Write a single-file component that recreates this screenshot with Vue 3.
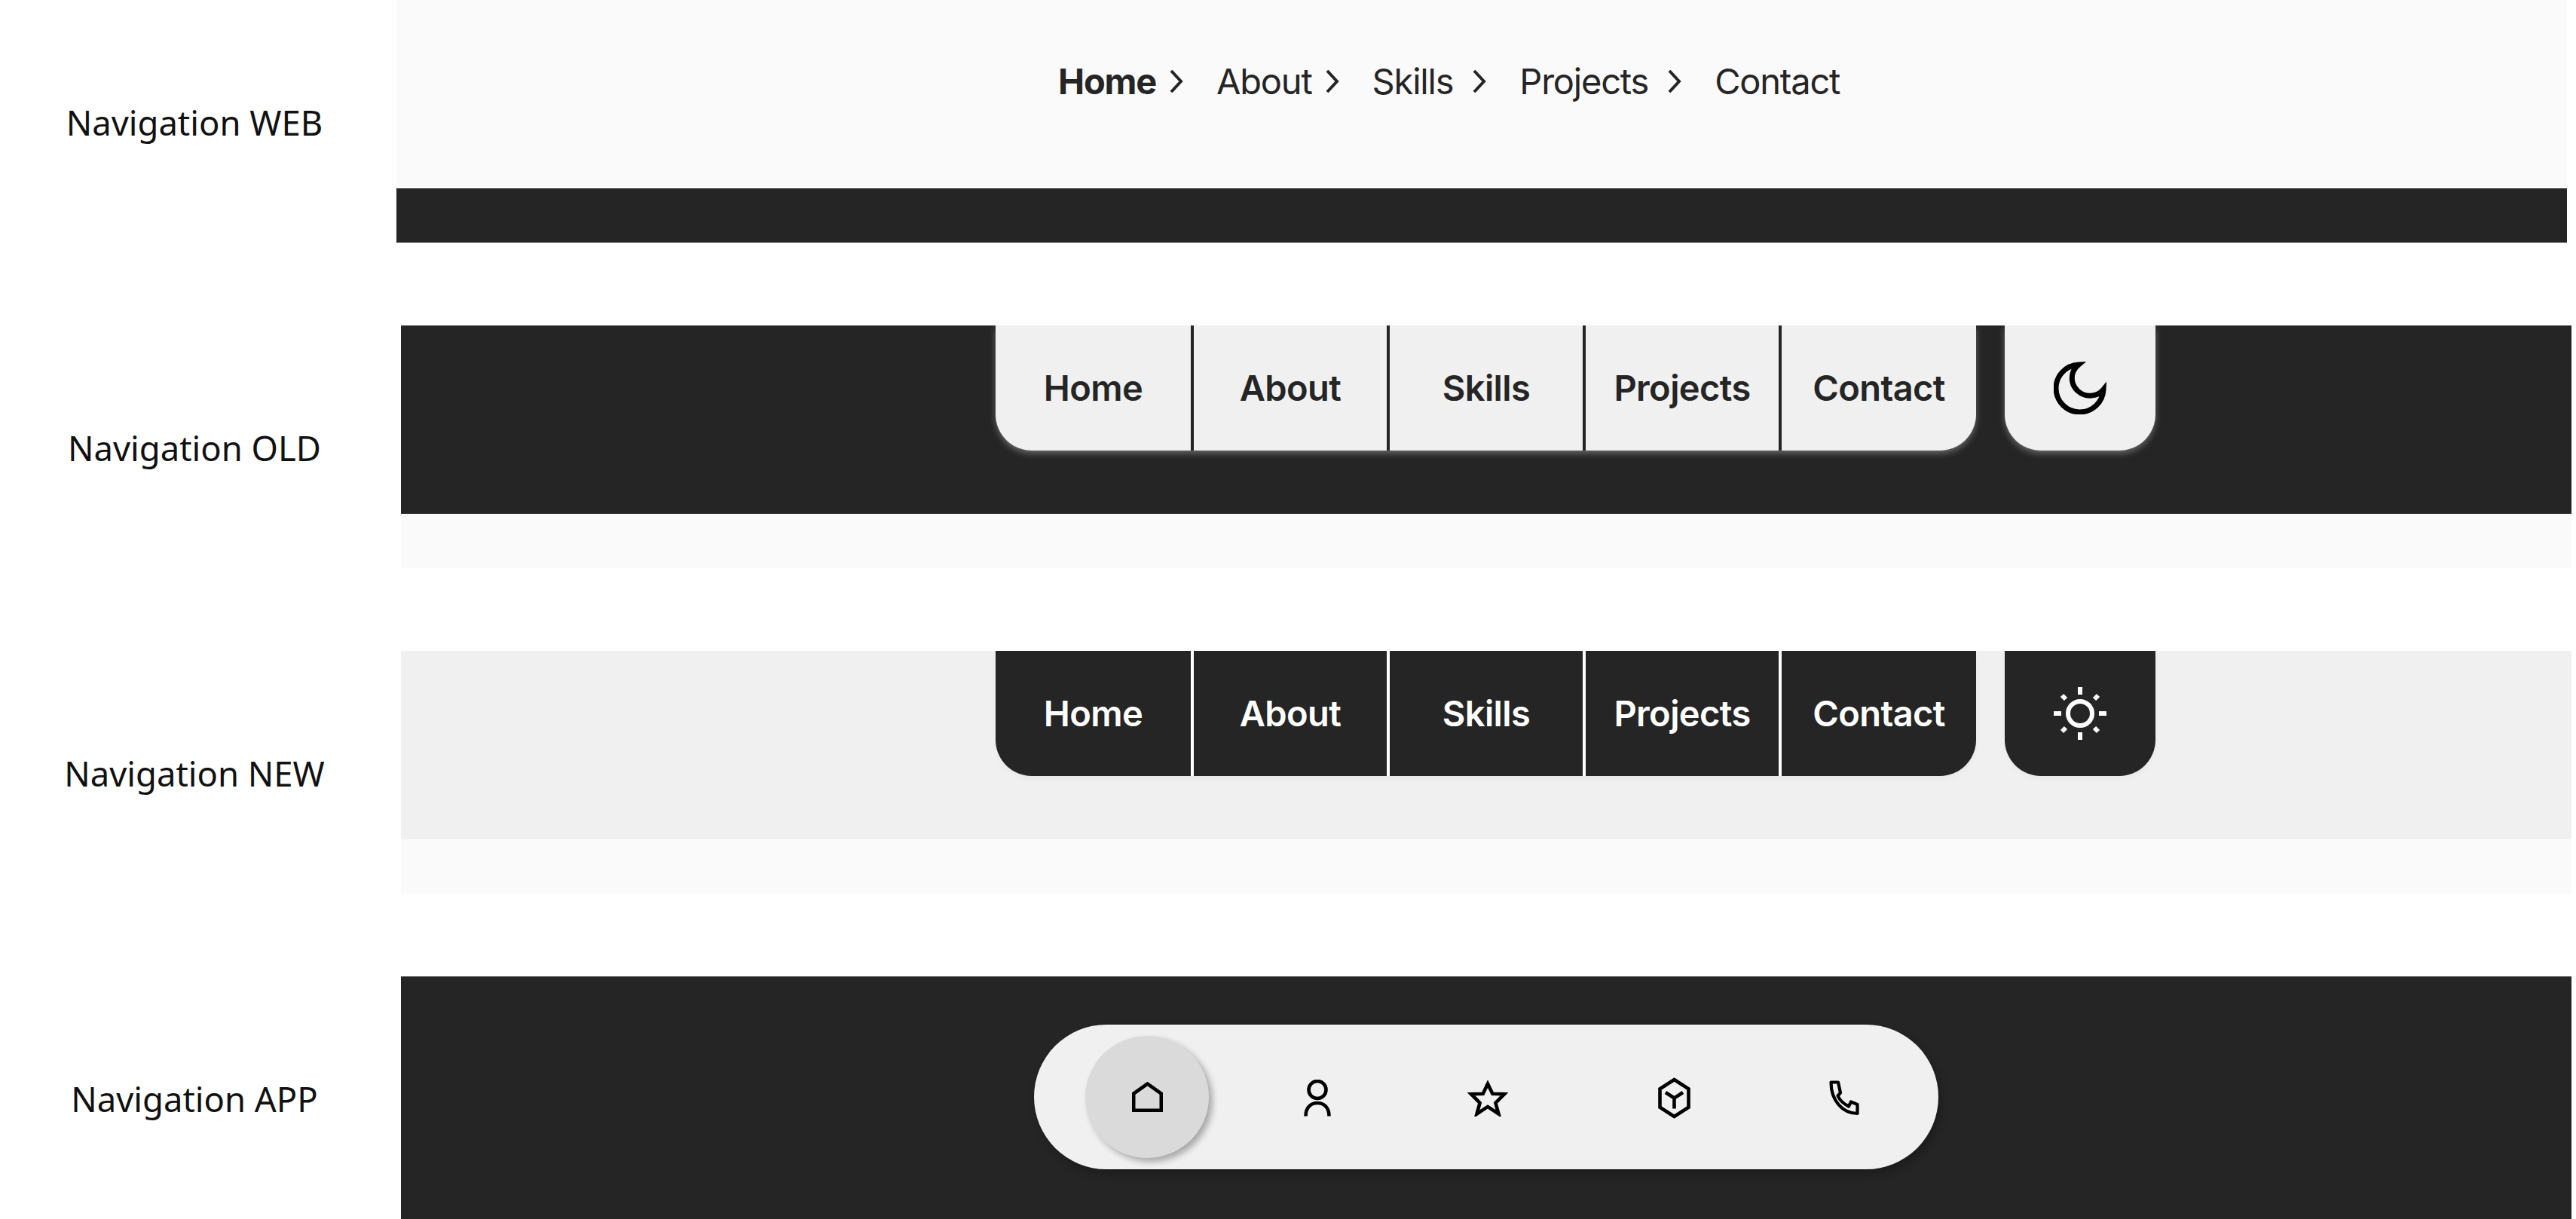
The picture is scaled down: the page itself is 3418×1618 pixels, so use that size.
<script setup>
const tabs = ['Home', 'About', 'Skills', 'Projects', 'Contact']
</script>

<template>
  <main class="page">
    <section class="row row-web">
      <h2 class="label">Navigation WEB</h2>
      <div class="frame">
        <nav class="crumbs">
          <template v-for="(t, i) in tabs" :key="t">
            <span class="crumb" :class="{ strong: i === 0 }">{{ t }}</span>
            <svg v-if="i < 4" class="chev" :class="{ far: i > 1 }" viewBox="0 0 20 30"><path d="M3 1l13 14L3 29" /></svg>
          </template>
        </nav>
        <div class="strip dark"></div>
      </div>
    </section>

    <section class="row">
      <h2 class="label">Navigation OLD</h2>
      <div class="frame">
        <div class="panel dark">
          <nav class="tabs light">
            <a v-for="t in tabs" :key="t" class="tab">{{ t }}</a>
          </nav>
          <button class="theme light">
            <svg viewBox="0 0 70 70" width="70" height="70"><path class="moon" d="M33 4C21 14 22 30 32 39C42 48 58 47 66 37A31.5 31.5 0 1 1 33 4Z" /></svg>
          </button>
        </div>
        <div class="strip pale"></div>
      </div>
    </section>

    <section class="row">
      <h2 class="label">Navigation NEW</h2>
      <div class="frame">
        <div class="panel grey">
          <nav class="tabs inverse">
            <a v-for="t in tabs" :key="t" class="tab">{{ t }}</a>
          </nav>
          <button class="theme inverse">
            <svg viewBox="0 0 70 70" width="70" height="70" class="sun">
              <circle cx="35" cy="35" r="16" />
              <path d="M35 0v10M35 60v10M0 35h10M60 35h10M11 11l5 5M54 54l5 5M11 59l5-5M54 16l5-5" />
            </svg>
          </button>
        </div>
        <div class="strip pale"></div>
      </div>
    </section>

    <section class="row">
      <h2 class="label">Navigation APP</h2>
      <div class="frame app">
        <nav class="pill">
          <a class="dock active">
            <svg viewBox="0 0 41 40" width="41" height="40"><path d="M2.2 37.8V15.5L20.5 2.5l18.3 13v22.3z" /></svg>
          </a>
          <a class="dock">
            <svg viewBox="0 0 36 49" width="36" height="49"><circle cx="18" cy="13.5" r="11.5" /><path d="M2.5 48.5C2.5 36 10 31 18 31S33.5 36 33.5 48.5" /></svg>
          </a>
          <a class="dock star">
            <svg viewBox="0 0 53.4 49.4" width="54" height="50"><path d="M26.7 6.5L33 19.5l15.5.5L37 31.5 41 46l-14.3-9.5L12.4 46 16.4 31.5 5 20l15.5-.5z" /></svg>
          </a>
          <a class="dock wide">
            <svg viewBox="0 0 43 55" width="43" height="55"><path d="M21.5 3l19 12.2v24.6L21.5 52 2.5 39.8V15.2z" /><path d="M10 20l11.5 7.5L33 20M21.5 27.5v14" /></svg>
          </a>
          <a class="dock">
            <svg viewBox="0 0 40 47" width="40" height="47" class="phone"><path d="M2.5 2.5H12L15 16.5 11.5 20.5C14 26 19 31 26 34.5L29 28.5 37.5 32V44C18 44 2.5 27 2.5 2.5z" /></svg>
          </a>
        </nav>
      </div>
    </section>
  </main>
</template>

<style>
html, body { margin: 0; background: #fff; }
</style>

<style scoped>
.page {
  display: flex;
  flex-direction: column;
  gap: 110px;
  width: 3418px;
  height: 1618px;
  overflow: hidden;
  font-family: Inter, "Liberation Sans", sans-serif;
  color: #252525;
}
.row { display: flex; align-items: stretch; gap: 16px; height: 322px; }
.row-web { margin-left: -6px; }
.row-web .label { padding-left: 12px; }
.label {
  width: 516px;
  margin: 0;
  padding-top: 3px;
  font: 400 45.4px/1 "Noto Sans", sans-serif;
  color: #111;
  text-align: center;
  align-self: center;
  flex: none;
  box-sizing: border-box;
}
.frame { width: 2880px; height: 322px; display: flex; flex-direction: column; flex: none; }
.strip { height: 72px; flex: none; }
.dark { background: #252525; }
.pale { background: #fafafa; }
.grey { background: #f0f0f0; }

.crumbs {
  height: 250px;
  flex: none;
  background: #fafafa;
  display: flex;
  align-items: flex-start;
  padding: 79px 0 0 878px;
  box-sizing: border-box;
  font-size: 47px;
  line-height: 57px;
  letter-spacing: -1.2px;
}
.crumb { white-space: nowrap; }
.crumb.strong { font-weight: 700; }
.chev { width: 20px; height: 30px; margin: 14px 43px 0 17px; flex: none; }
.chev.far { margin-left: 25px; }
.chev path { fill: none; stroke: #252525; stroke-width: 4; }

.panel {
  height: 250px;
  flex: none;
  display: flex;
  align-items: flex-start;
  gap: 38px;
  padding-left: 789px;
  box-sizing: border-box;
}
.tabs {
  display: grid;
  grid-template-columns: 259px 260px 260px 260px 262px;
  height: 166px;
  border-radius: 0 0 48px 48px;
  flex: none;
}
.tab {
  box-sizing: border-box;
  padding-bottom: 2px;
  display: flex;
  align-items: center;
  justify-content: center;
  font-size: 47px;
  font-weight: 600;
  letter-spacing: -.6px;
  white-space: nowrap;
}
.tab + .tab { border-left: 4px solid currentColor; }
.theme {
  width: 200px;
  height: 166px;
  border: 0;
  padding: 0;
  border-radius: 0 0 48px 48px;
  display: flex;
  align-items: center;
  justify-content: center;
  flex: none;
}
.light { background: #f0f0f0; color: #252525; box-shadow: 0 4px 8px rgba(255, 255, 255, .3); }
.inverse { background: #252525; color: #fff; box-shadow: 0 4px 8px rgba(0, 0, 0, .03); }
.moon { fill: none; stroke: #000; stroke-width: 7; stroke-miterlimit: 12; }
.sun { fill: none; stroke: #fff; stroke-width: 6; }

.app { background: #252525; align-items: flex-start; padding: 64px 0 0 840px; box-sizing: border-box; }
.pill {
  width: 1200px;
  height: 192px;
  border-radius: 96px;
  background: #f0f0f0;
  box-shadow: 4px 6px 12px rgba(0, 0, 0, .25);
  display: flex;
  align-items: center;
  padding-left: 68px;
  gap: 62px;
  box-sizing: border-box;
}
.dock {
  width: 164px;
  height: 162px;
  padding-top: 3px;
  box-sizing: border-box;
  border-radius: 50%;
  display: flex;
  align-items: center;
  justify-content: center;
  flex: none;
}
.dock.star { padding-top: 1px; }
.dock.wide { margin-left: 21px; }
.dock.active { padding-top: 0; background: #dadada; box-shadow: 5px 5px 8px rgba(0, 0, 0, .3); }
.dock svg { fill: none; stroke: #000; stroke-width: 4.6; stroke-miterlimit: 10; }
.dock svg.phone { stroke-width: 4.2; stroke-linejoin: round; }
</style>
